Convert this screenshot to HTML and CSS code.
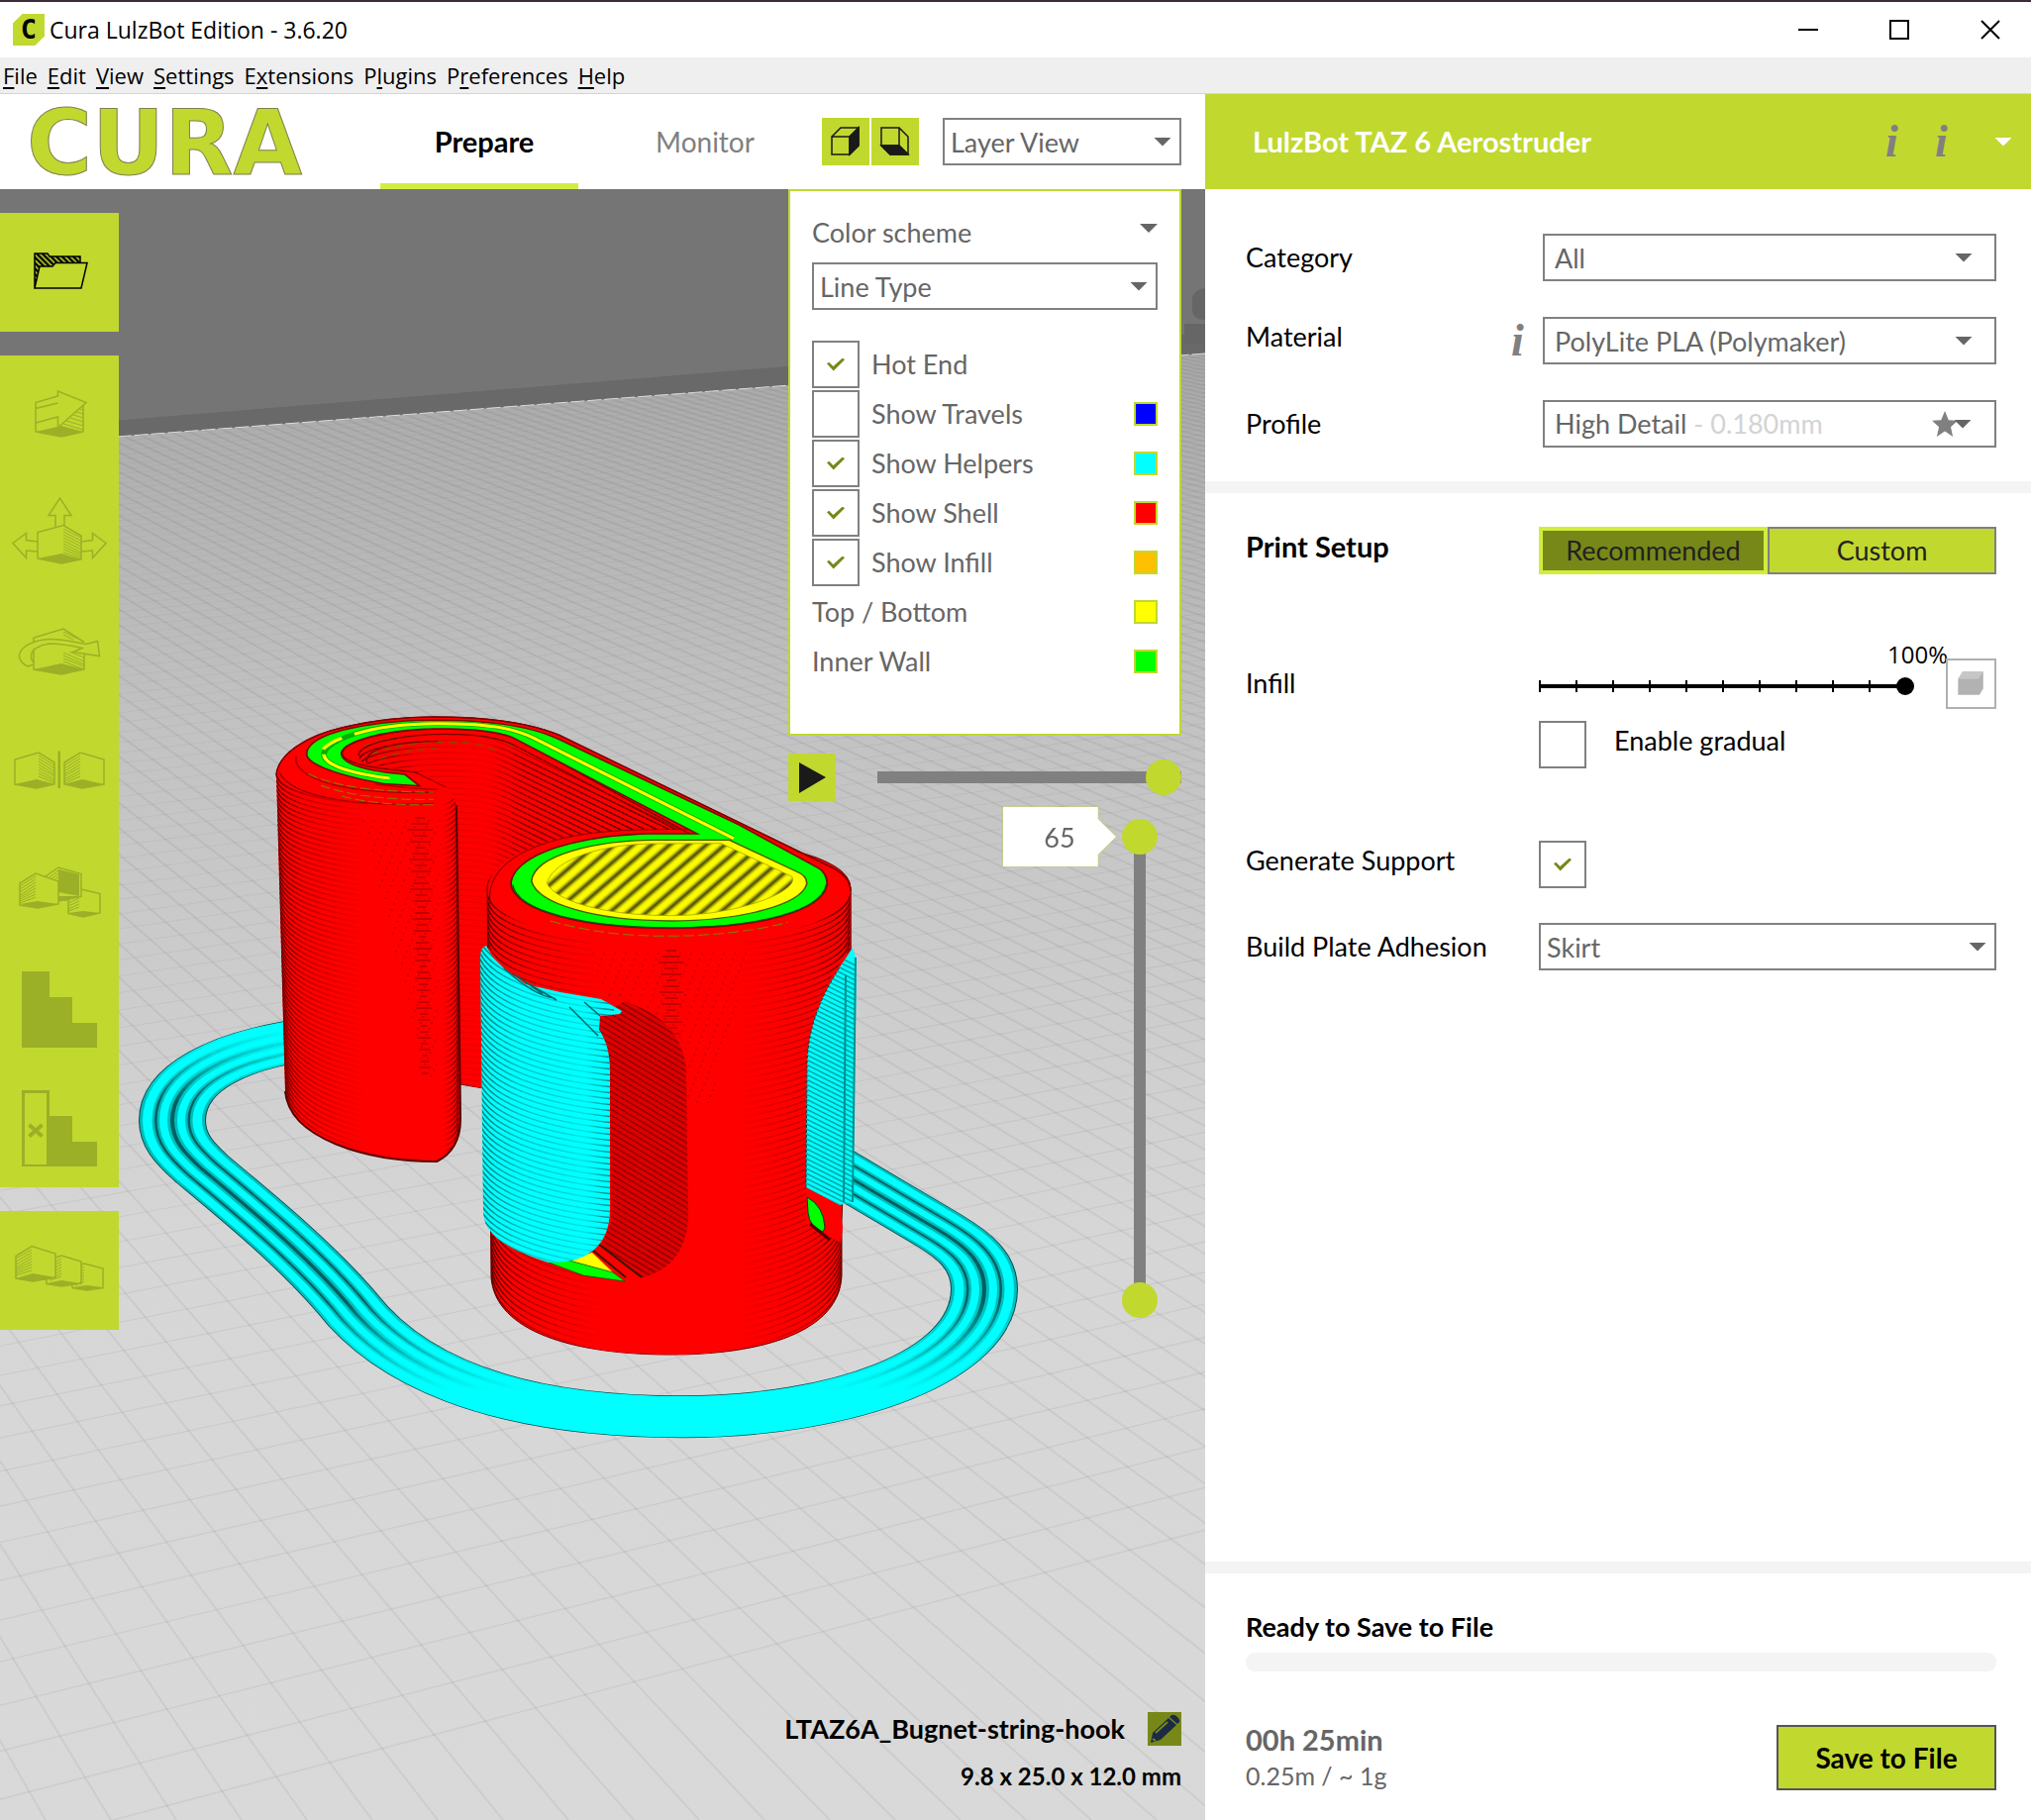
FILE: index.html
```html
<!DOCTYPE html>
<html lang="en">
<head>
    <meta charset="UTF-8">
    <meta name="viewport" content="width=device-width, initial-scale=1.0">
    <title>Cura LulzBot Edition - 3.6.20</title>
    <link rel="stylesheet" href="styles.css">
</head>
<body>

    <!-- Title bar -->
    <header class="titlebar">
        <span class="app-icon" aria-hidden="true">C</span>
        <h1 class="app-title">Cura LulzBot Edition - 3.6.20</h1>
        <div class="window-buttons">
            <button aria-label="Minimize"><svg viewBox="0 0 20 20"><path d="M0 10H20"/></svg></button>
            <button aria-label="Maximize"><svg viewBox="0 0 20 20"><path d="M1 1H19V19H1Z"/></svg></button>
            <button aria-label="Close"><svg viewBox="0 0 20 20"><path d="M1 1L19 19M19 1L1 19"/></svg></button>
        </div>
    </header>

    <nav class="menubar">
        <a href="#"><u>F</u>ile</a>
        <a href="#"><u>E</u>dit</a>
        <a href="#"><u>V</u>iew</a>
        <a href="#"><u>S</u>ettings</a>
        <a href="#">E<u>x</u>tensions</a>
        <a href="#">P<u>l</u>ugins</a>
        <a href="#">P<u>r</u>eferences</a>
        <a href="#"><u>H</u>elp</a>
    </nav>

    <main class="app">
        <section class="workspace">
            <div class="topbar">
                <div class="logo">CURA</div>
                <div class="tabs">
                    <a class="tab active" href="#">Prepare</a>
                    <a class="tab" href="#">Monitor</a>
                </div>
                <div class="view-tools">
                    <button class="view-button" aria-label="Perspective">
                        <svg viewBox="0 0 48 48"><path class="dark" d="M28 19L37 10V28L28 37Z"/><path d="M10 19H28V37H10ZM10 19L19 10H37M28 19L37 10V28L28 37"/></svg>
                    </button>
                    <button class="view-button" aria-label="Orthographic">
                        <svg viewBox="0 0 48 48"><path class="dark" d="M10 28H28L37 37H19Z"/><path d="M10 10H28V28H10ZM28 10L37 19V37H19L10 28M28 28L37 37"/></svg>
                    </button>
                </div>
                <div class="combo view-combo">
                    <select aria-label="View mode"><option>Layer View</option></select>
                </div>
            </div>

            <div class="stage">
                <svg class="scene" viewBox="0 191 1217 1647" preserveAspectRatio="xMinYMin slice" aria-hidden="true">
                    <defs>
                        <linearGradient id="floor" x1="0" y1="0" x2="0" y2="1">
                            <stop offset="0" stop-color="#a9a9a9"/>
                            <stop offset=".25" stop-color="#c2c2c2"/>
                            <stop offset=".6" stop-color="#d6d6d6"/>
                            <stop offset="1" stop-color="#d9d9d9"/>
                        </linearGradient>
                        <linearGradient id="groove" gradientUnits="userSpaceOnUse" x1="0" y1="1650" x2="0" y2="2230">
                            <stop offset="0" stop-color="#00ffff"/>
                            <stop offset=".2" stop-color="#005f5f"/>
                            <stop offset=".75" stop-color="#005f5f"/>
                            <stop offset="1" stop-color="#00ffff"/>
                        </linearGradient>
                        <linearGradient id="grooveSoft" gradientUnits="userSpaceOnUse" x1="0" y1="1650" x2="0" y2="2230">
                            <stop offset="0" stop-color="#00ffff"/>
                            <stop offset=".2" stop-color="#00bcbc"/>
                            <stop offset=".75" stop-color="#00bcbc"/>
                            <stop offset="1" stop-color="#00ffff"/>
                        </linearGradient>
                        <linearGradient id="columnLines" gradientUnits="userSpaceOnUse" x1="279" y1="0" x2="465" y2="0">
                            <stop offset="0" stop-color="#5a0000"/>
                            <stop offset=".15" stop-color="#b80000"/>
                            <stop offset=".5" stop-color="#ff0000"/>
                            <stop offset=".9" stop-color="#ff0000"/>
                            <stop offset="1" stop-color="#600000"/>
                        </linearGradient>
                        <linearGradient id="bodyLines" gradientUnits="userSpaceOnUse" x1="493" y1="0" x2="859" y2="0">
                            <stop offset="0" stop-color="#5a0000"/>
                            <stop offset=".12" stop-color="#b80000"/>
                            <stop offset=".32" stop-color="#ff0000"/>
                            <stop offset=".68" stop-color="#ff0000"/>
                            <stop offset=".9" stop-color="#b80000"/>
                            <stop offset="1" stop-color="#5a0000"/>
                        </linearGradient>
                        <linearGradient id="wallLines" gradientUnits="userSpaceOnUse" x1="362" y1="0" x2="620" y2="0">
                            <stop offset="0" stop-color="#500000"/>
                            <stop offset=".25" stop-color="#e00000"/>
                            <stop offset=".5" stop-color="#f00000"/>
                            <stop offset=".65" stop-color="#8c0000"/>
                            <stop offset="1" stop-color="#700000"/>
                        </linearGradient>
                        <linearGradient id="supportLines" gradientUnits="userSpaceOnUse" x1="485" y1="0" x2="617" y2="0">
                            <stop offset="0" stop-color="#007a7a"/>
                            <stop offset=".3" stop-color="#00c0c0"/>
                            <stop offset=".8" stop-color="#00e2e2"/>
                            <stop offset="1" stop-color="#008080"/>
                        </linearGradient>
                        <linearGradient id="bead" gradientUnits="userSpaceOnUse" x1="0" y1="0" x2="24" y2="22" spreadMethod="repeat">
                            <stop offset="0" stop-color="#4a4a00"/>
                            <stop offset=".3" stop-color="#f0f000"/>
                            <stop offset=".5" stop-color="#ffff00"/>
                            <stop offset=".7" stop-color="#f0f000"/>
                            <stop offset="1" stop-color="#4a4a00"/>
                        </linearGradient>
                        <clipPath id="floorClip"><path d="M0 450L1217 357V1838H0Z"/></clipPath>
                        <clipPath id="wallClip"><path d="M421 780C395 778 362 775 362 763C362 750 405 742 450 742C485 742 500 745 520 756L699 843C640 840 560 850 520 870C500 880 493 890 493 900V1100L465 1095L461 813C458 800 440 785 421 780Z"/></clipPath>
                        <clipPath id="columnClip"><path id="columnShape" d="M279 783L288 1102C292 1150 370 1173 441 1173C457 1165 465 1150 465 1130L461 815C458 795 445 790 421 780L300 760Z"/></clipPath>
                        <clipPath id="bodyClip"><path d="M492 897V955L509 978C531 1000 570 1003 607 1009L631 1011C665 1022 692 1050 694 1070V1244C688 1272 660 1292 631 1294L554 1275L496 1246V1290C500 1345 580 1368 677 1368C770 1368 848 1345 850 1288V1234L818 1234L815 1075C818 1030 833 990 858 960V897Z"/></clipPath>
                        <clipPath id="supportClip"><path id="supportShape" d="M485 968Q485 956 491 955L497 966L509 978L531 994L566 1002L607 1009L628 1021L626 1024L606 1026L605 1040C613 1052 616 1064 616 1084V1220C616 1252 600 1276 554 1275C526 1266 505 1256 496 1244Q488 1236 488 1222Z"/></clipPath>
                        <clipPath id="recessClip"><path id="recessShape" d="M606 1026L631 1011L648 1018C675 1030 693 1055 693 1084L695 1230C694 1262 676 1284 648 1290L607 1258L617 1234L616 1072L605 1045Z"/></clipPath>
                        <clipPath id="rightClip"><path id="rightShape" d="M861 957L865 970L861 1214L848 1217L814 1199L815 1075C816 1035 830 1005 848 977Z"/></clipPath>
                    </defs>

                    <!-- Back wall and build plate -->
                    <rect y="191" width="1217" height="300" fill="#757575"/>
                    <path d="M0 434L796 370L1217 336V380L0 470Z" fill="#696969"/>
                    <path d="M1204 300q3-8 13-9v32q-12 0-13-9ZM1196 327h21v20h-21Z" fill="#666"/>
                    <path d="M0 450L1217 357V1838H0Z" fill="url(#floor)"/>
                    <path d="M0 450L1217 357" stroke="#e0e0e0" stroke-dasharray="14 3" fill="none"/>
                    <g id="grid" clip-path="url(#floorClip)" stroke="#000" stroke-opacity=".055" stroke-width="2" fill="none"></g>

                    <!-- Skirt, flattened by the camera angle -->
                    <g id="skirt" transform="scale(1 .63)" fill="none"></g>

                    <!-- Hook: far wall, then the front column -->
                    <path d="M279 783C280 763 307 743 349 734C379 727 408 724 438 724C484 724 530 728 564 742L840 876C852 882 859 890 859 900V960L700 1099H488L465 1095L300 900Z" fill="#ff0000" stroke="#6a0000"/>
                    <g id="wall" clip-path="url(#wallClip)" fill="none" stroke="url(#wallLines)" stroke-width="1.5"></g>
                    <use href="#columnShape" fill="#ff0000"/>
                    <g id="column" clip-path="url(#columnClip)" fill="none" stroke="url(#columnLines)" stroke-width="1.5"></g>
                    <path d="M461 813L465 1130C465 1150 457 1165 441 1173C370 1173 292 1150 288 1102" fill="none" stroke="#5a0000" stroke-width="2"/>

                    <!-- Cylinder body -->
                    <path d="M492 897L496 1290C500 1345 580 1368 677 1368C770 1368 848 1345 850 1288V1234L859 960V897C859 830 492 830 492 897Z" fill="#ff0000" stroke="#6a0000"/>
                    <g id="body" clip-path="url(#bodyClip)" fill="none" stroke="url(#bodyLines)" stroke-width="1.5"></g>

                    <!-- Recess and helper structures -->
                    <use href="#recessShape" fill="#dc0000"/>
                    <g id="recess" clip-path="url(#recessClip)" stroke="#8c0000" stroke-width="1.5"></g>
                    <path d="M575 1273L598 1265L619 1285Z" fill="#ffff00"/>
                    <path d="M554 1275L575 1273L619 1285L631 1294L589 1288Z" fill="#00ff00" stroke="#004000" stroke-width=".6"/>
                    <path d="M604 1256L648 1290M598 1262L632 1290" stroke="#3a1600" stroke-width="2"/>
                    <use href="#supportShape" fill="#00ffff"/>
                    <g id="support" clip-path="url(#supportClip)" fill="none" stroke="url(#supportLines)" stroke-width="1.5"></g>
                    <path d="M509 978Q540 1006 560 1008M520 984L548 1004M531 992L562 1010M575 1017L604 1046M590 1012L606 1026" stroke="#006a6a" stroke-width="1.5" fill="none"/>
                    <path d="M814 1199L848 1217L851 1240L849 1255L814 1236Z" fill="#ff0000"/>
                    <path d="M815 1209Q832 1218 833 1240L831 1244Q818 1240 816 1225Z" fill="#00ff00" stroke="#003c00"/>
                    <path d="M818 1236L838 1252" stroke="#500000" stroke-width="3"/>
                    <use href="#rightShape" fill="#00ffff"/>
                    <g id="right" clip-path="url(#rightClip)" stroke="#00a4a4" stroke-width="1.5"></g>
                    <path d="M864 967L861 1214M854 985L852 1214" stroke="#008f8f" stroke-width="2"/>
                    <path d="M814 1199L815 1075C816 1035 830 1005 848 977" stroke="#004848" fill="none" stroke-dasharray="3 2"/>

                    <!-- Top layer -->
                    <g transform="translate(240 700) scale(.4209 .3333)" fill="none">
                        <path d="M600 600C600 480 780 414 1000 412L1110 416L1200 400L1425 527C1455 545 1470 570 1470 600C1460 690 1290 755 1040 755C790 755 610 700 600 600Z" fill="#ff0000"/>
                        <path d="M606 640C590 500 740 420 960 414L1100 412" stroke="#8a0000" stroke-width="3"/>
                        <path d="M100 240C130 320 300 345 470 334M140 190C130 260 260 310 470 300M500 285L420 236M480 292Q410 290 330 275" stroke="#a00000" stroke-width="4"/>
                        <path d="M170 245Q260 300 470 300M200 280Q300 325 470 322M250 312Q340 342 470 338" stroke="#808000" stroke-width="3" stroke-dasharray="24 9"/>
                        <path d="M300 160Q380 125 500 125T660 160M320 185Q380 150 490 148T620 180M340 200Q400 170 480 168" stroke="#606000" stroke-width="3" stroke-dasharray="20 12"/>
                        <path d="M430 240C330 228 250 215 250 180C260 140 380 108 490 108C580 108 640 120 680 145L1090 430M290 190C290 150 400 124 500 124C590 124 640 140 670 162L1050 412M310 210C300 165 400 146 480 146" stroke="#7a0000" stroke-width="4"/>
                        <path d="M430 278L350 272C250 250 168 215 168 185C168 120 330 84 470 84C600 84 700 100 770 142L1200 400L1390 530C1405 540 1413 560 1412 580C1400 660 1250 710 1040 710C830 710 670 660 658 580C660 490 820 430 1000 428H1110L660 132C620 112 560 106 480 106C370 106 247 140 247 185C250 225 340 242 400 248Z" fill="#00ff00" stroke="#7a0800" stroke-width="9" paint-order="stroke"/>
                        <path d="M660 580C670 660 830 710 1040 710C1250 710 1400 660 1412 580" stroke="#005c00" stroke-width="3"/>
                        <path d="M365 258C280 245 207 220 207 185C207 150 300 92 480 92C600 92 660 105 710 136L1190 440" stroke="#00b000" stroke-width="14"/>
                        <path d="M365 258C280 245 207 220 207 185M205 170Q220 150 250 136M280 124Q360 92 480 92C600 92 660 105 710 136L1190 440" stroke="#ffff00" stroke-width="9"/>
                        <path d="M1180 445L1340 540C1360 550 1367 565 1365 580C1350 640 1210 690 1040 690C860 690 720 640 705 570C710 490 860 446 1000 445Z" fill="#ffff00" stroke="#4a5a00" stroke-width="4"/>
                        <path d="M1160 455L1330 556C1350 600 1200 674 1040 674C880 674 760 630 742 575C760 500 880 456 1000 456Z" fill="url(#bead)" stroke="#a0a000" stroke-width="2"/>
                        <path d="M750 690Q880 738 1040 736T1320 694" stroke="#808000" stroke-width="3" stroke-dasharray="26 10"/>
                    </g>
                    <path d="M279 783C280 763 307 743 349 734C379 727 408 724 438 724C484 724 530 728 564 742L840 876C852 882 859 890 859 900" fill="none" stroke="#7a0000" stroke-width="1.5"/>
                </svg>

                <aside class="toolbar">
                    <div class="tool-group">
                        <button class="tool open" aria-label="Open File">
                            <svg viewBox="0 0 120 120">
                                <defs><pattern id="stripes" width="4" height="4" patternUnits="userSpaceOnUse" patternTransform="rotate(-45)"><rect width="2.4" height="4" fill="#000"/></pattern></defs>
                                <path d="M35 76L40 54H53L56 50H81V44H50L48 41H35Z"/>
                                <path d="M35 76V41H48L50 44H81V50M35 76L40 54H53L56 50.500H88L82 76Z"/>
                            </svg>
                        </button>
                    </div>
                    <div class="tool-group">
                        <button class="tool" aria-label="Move">
                            <svg viewBox="0 0 120 120">
                                <path class="fill" d="M36 77L62 71L84 77L62 82Z"/>
                                <path d="M36 77V47.500L58.500 41V36L87 47.500L60.500 71H58.500V62L36 68M36 53.500L58.500 48M84 50V77M36 77L62 82L84 77"/>
                                <path class="hatch" d="M80 54L84 55M77 57L84 59M74 60L84 63M71 63L84 67M67 66L84 71M64 69L84 75"/>
                            </svg>
                        </button>
                        <button class="tool" aria-label="Scale">
                            <svg viewBox="0 0 120 120">
                                <path class="fill" d="M38 85L62 80L82 86L62 90Z"/>
                                <path d="M56 53V41.500H49L60.500 24L72 41.500H65V51.500M38 68L26.500 66.500V59.500L13 69.500L26.500 84.500V77L38 78M82 68L93.500 66.500V59.500L107 69.500L93.500 84.500V77L82 78M38 85V58.500L64 51.500L82 62V86L62 90Z"/>
                                <path class="hatch" d="M64 55L82 64M64 58L82 67M64 61L82 70M64 64L82 73M64 67L82 76M64 70L82 79M64 73L82 81M64 76L82 83M64 79L82 85"/>
                            </svg>
                        </button>
                        <button class="tool" aria-label="Rotate">
                            <svg viewBox="0 0 120 120">
                                <path class="fill" d="M34 77L62 71L85 77L62 82Z"/>
                                <path d="M34 49V45L64 36L85 49.500M34 56V77L62 82L85 77V61M28 74C22 71 19 67 19.500 62.500C21 53 36 47 50 46.500C64 46 75 50 87 51.500L98.500 48.500L100.500 63.500L74 59.500L83 55.500C72 53 60 51 50 51C40 52 32 57 31.500 62.500C31 66 32 68 34 70M28 74L34 72"/>
                                <path class="hatch" d="M64 39L78 46M64 42L74 47M64 60L85 69M64 63L85 72M64 66L85 74M64 69L85 77M70 59L85 65"/>
                            </svg>
                        </button>
                        <button class="tool" aria-label="Mirror">
                            <svg viewBox="0 0 120 120">
                                <path class="fill" d="M15 73L37 68L55 73L37 77ZM105 73L83 68L65 73L83 77ZM58.500 39.500H61V77H58.500Z"/>
                                <path d="M15 73V48L39 41L55 51V73L37 77ZM105 73V48L81 41L65 51V73L83 77Z"/>
                                <path class="hatch" d="M39 44L55 54M39 47L55 57M39 50L55 60M39 53L55 63M39 56L55 65M39 59L55 68M39 62L55 70M39 65L55 72M81 44L65 54M81 47L65 57M81 50L65 60M81 53L65 63M81 56L65 65M81 59L65 68M81 62L65 70M81 65L65 72"/>
                            </svg>
                        </button>
                        <button class="tool" aria-label="Per Model Settings">
                            <svg viewBox="0 0 120 120">
                                <path class="fill" d="M20 74L38 71L59 74L38 78ZM59 39L80 44V66L59 62ZM59 66L82 66L66 71L59 70ZM69 83L84 81L101 83L84 87Z"/>
                                <path d="M20 75V53L36 43L59 51V74L38 78ZM46 46L59 37L82 43.500V66.500L59 71M82 59L101 63.500V83L84 87L69 83.500V69"/>
                                <path class="hatch" d="M36 46L20 56M36 49L20 59M36 52L20 62M36 55L20 65M36 58L20 67M36 61L20 69M36 64L20 71M36 67L20 73M59 40L50 47M59 43L53 48M59 46L56 49M80 68L69 73M80 71L69 76M80 74L69 79M80 77L69 81"/>
                            </svg>
                        </button>
                        <button class="tool" aria-label="Support Blocker">
                            <svg viewBox="0 0 120 120"><path class="fill" d="M22 22H50V48H73V74H98V99H22Z"/></svg>
                        </button>
                        <button class="tool" aria-label="Support Eraser">
                            <svg viewBox="0 0 120 120"><path class="fill" fill-rule="evenodd" d="M22 22H50V48H73V74H98V99H22ZM25 25V97H47V25Z"/><path class="cross" d="M29.500 57L42.500 68.500M42.500 57L29.500 68.500"/></svg>
                        </button>
                    </div>
                    <div class="tool-group">
                        <button class="tool" aria-label="Arrange Models">
                            <svg viewBox="0 0 120 120">
                                <path class="fill" d="M16 68L33 63L56 67L33 71ZM47 73L62 70L82 73L62 76ZM73 77L88 75L104 77L88 80Z"/>
                                <path d="M16 68V45.500L32 35.500L56 43V67L33 71ZM56 47L62 45L82 51V73L62 76L47 73.500V69M82 54L85 53L104 58V77.500L88 80L73 77.500V74"/>
                                <path class="hatch" d="M32 39L16 48M32 42L16 51M32 45L16 54M32 48L16 57M32 51L16 59M32 54L16 61M32 57L16 63M32 60L16 65M62 48L56 51M62 51L56 54M62 54L56 57M62 57L56 60M62 60L56 63M62 63L56 66M62 66L50 70M85 56L82 58M85 59L82 61M85 62L82 64M85 65L82 67M85 68L82 70M85 71L76 75"/>
                            </svg>
                        </button>
                    </div>
                </aside>

                <div class="view-side">
                    <form class="layer-panel">
                        <div class="scheme-head"><label for="scheme">Color scheme</label><span class="arrow"></span></div>
                        <div class="combo">
                            <select id="scheme"><option>Line Type</option></select>
                        </div>
                        <ul class="legend">
                            <li><label><input type="checkbox" checked>Hot End</label></li>
                            <li><label><input type="checkbox">Show Travels</label><span class="swatch travels"></span></li>
                            <li><label><input type="checkbox" checked>Show Helpers</label><span class="swatch helpers"></span></li>
                            <li><label><input type="checkbox" checked>Show Shell</label><span class="swatch shell"></span></li>
                            <li><label><input type="checkbox" checked>Show Infill</label><span class="swatch fill-lines"></span></li>
                            <li><span>Top / Bottom</span><span class="swatch skin"></span></li>
                            <li><span>Inner Wall</span><span class="swatch inner"></span></li>
                        </ul>
                    </form>

                    <div class="path-row">
                        <button class="play" aria-label="Play"><svg viewBox="0 0 48 48"><path d="M11 9L38 24L11 40Z"/></svg></button>
                        <input class="path-range" type="range" min="0" max="100" value="100" aria-label="Path">
                    </div>

                    <div class="layer-row">
                        <div class="layer-tag"><output class="layer-value">65</output></div>
                        <div class="layer-slider">
                            <input type="range" min="1" max="65" value="1" aria-label="Lowest layer">
                            <input type="range" min="1" max="65" value="65" aria-label="Highest layer">
                        </div>
                    </div>

                    <div class="job">
                        <div class="job-name">
                            <strong>LTAZ6A_Bugnet-string-hook</strong>
                            <button class="rename" aria-label="Rename job">
                                <svg viewBox="0 0 34 34"><path d="M3 31L5 21L21 6L29 13L13 28Z"/><path d="M23 4Q26 1 30 5T31 11L30 12L22 5Z"/><path class="shine" d="M8 21L20 10M5 27L8 29"/></svg>
                            </button>
                        </div>
                        <strong class="job-size">9.8 x 25.0 x 12.0 mm</strong>
                    </div>
                </div>
            </div>
        </section>

        <section class="sidebar">
            <div class="machine">
                <h2>LulzBot TAZ 6 Aerostruder</h2>
                <button class="info" aria-label="Machine information">i</button>
                <button class="info" aria-label="Tool head information">i</button>
                <button class="machine-menu" aria-label="Choose machine"><span class="arrow"></span></button>
            </div>

            <div class="settings material-settings">
                <div class="row">
                    <label for="category">Category</label>
                    <div class="combo wide"><select id="category"><option>All</option></select></div>
                </div>
                <div class="row">
                    <span class="with-info"><label class="raised" for="material">Material</label><button class="info" aria-label="Material information">i</button></span>
                    <div class="combo wide"><select id="material"><option>PolyLite PLA (Polymaker)</option></select></div>
                </div>
                <div class="row">
                    <span id="profile-label">Profile</span>
                    <button class="profile" aria-labelledby="profile-label">
                        <span>High Detail <span class="faint">- 0.180mm</span></span>
                        <svg class="star" viewBox="0 0 24 24"><path d="M12 0L15.500 8.500L24 9L17.500 15L19.500 24L12 19L4.500 24L6.500 15L0 9L8.500 8.500Z"/></svg>
                        <span class="arrow"></span>
                    </button>
                </div>
            </div>

            <div class="settings print-settings">
                <div class="row">
                    <h3 class="raised">Print Setup</h3>
                    <div class="modes">
                        <button class="mode selected">Recommended</button>
                        <button class="mode">Custom</button>
                    </div>
                </div>
                <div class="row infill-row">
                    <label for="infill">Infill</label>
                    <div class="infill">
                        <div class="infill-slider">
                            <output>100%</output>
                            <input id="infill" type="range" min="0" max="100" step="10" value="100">
                        </div>
                        <button class="infill-icon" aria-label="Infill density">
                            <svg viewBox="0 0 50 50"><path fill="#b2b2b2" d="M11 20L16 12H38L38 30L34 37H11Z"/><path fill="#c6c6c6" d="M11 20L16 12H38L33 20Z"/></svg>
                        </button>
                    </div>
                </div>
                <div class="row gradual-row">
                    <span></span>
                    <div class="gradual">
                        <input id="gradual" type="checkbox">
                        <label class="raised" for="gradual">Enable gradual</label>
                    </div>
                </div>
                <div class="row support-row">
                    <label class="raised" for="support-box">Generate Support</label>
                    <input id="support-box" type="checkbox" checked>
                </div>
                <div class="row">
                    <label for="adhesion">Build Plate Adhesion</label>
                    <div class="combo"><select id="adhesion"><option>Skirt</option></select></div>
                </div>
            </div>

            <footer class="save">
                <h3>Ready to Save to File</h3>
                <div class="progress"></div>
                <div class="save-row">
                    <div>
                        <div class="time">00h 25min</div>
                        <div class="usage">0.25m / ~ 1g</div>
                    </div>
                    <button class="save-button">Save to File</button>
                </div>
            </footer>
        </section>
    </main>

    <script src="scene.js"></script>
</body>
</html>
```
FILE: styles.css
```css
* {
    margin: 0;
    padding: 0;
    box-sizing: border-box;
}

body {
    font-family: Lato, "Open Sans", sans-serif;
    font-size: 27px;
    line-height: 36px;
    background-color: #fff;
    color: #000;
    display: flex;
    flex-direction: column;
    min-height: 100vh;
}

button, select, input {
    font: inherit;
    color: inherit;
    border: none;
    background: none;
    border-radius: 0;
}

button {
    cursor: pointer;
}

a {
    color: inherit;
    text-decoration: none;
}

svg {
    display: block;
}

/* Title bar and menu */
.titlebar {
    display: flex;
    align-items: center;
    height: 58px;
    border-top: 2px solid #3a2c38;
    padding: 0 31px 0 13px;
    font-family: "Open Sans", sans-serif;
}

.app-icon {
    width: 32px;
    height: 32px;
    margin-right: 5px;
    background-color: #c1d82f;
    clip-path: polygon(30% 0, 100% 0, 100% 70%, 70% 100%, 0 100%, 0 30%);
    font: bold 27px/32px "DejaVu Sans Mono", monospace;
    text-align: center;
}

.app-title {
    flex: 1;
    font-size: 23px;
    font-weight: normal;
}

.window-buttons {
    display: flex;
    gap: 72px;
}

.window-buttons svg {
    width: 20px;
    height: 20px;
    fill: none;
    stroke: #000;
    stroke-width: 2;
}

.menubar {
    display: flex;
    align-items: center;
    gap: 10px;
    height: 37px;
    padding: 0 3px;
    background-color: #efefef;
    border-bottom: 1px solid #d4d4d4;
    font: 22px/36px "Open Sans", sans-serif;
}

.menubar u {
    text-underline-offset: 3px;
}

.app {
    flex: 1;
    display: grid;
    grid-template-columns: 1fr 834px;
}

.workspace {
    display: flex;
    flex-direction: column;
}

/* Top bar */
.topbar {
    display: flex;
    align-items: center;
    height: 96px;
    padding: 0 24px 0 27px;
}

.logo {
    width: 357px;
    padding-top: 4px;
    font: bold 90px/92px "DejaVu Sans", sans-serif;
    color: #c1d82f;
    -webkit-text-stroke: 1px #808050;
}

.tabs {
    display: flex;
    gap: 28px;
    height: 100%;
}

.tab {
    width: 200px;
    font-size: 28px;
    line-height: 96px;
    text-align: center;
    color: #808080;
}

.tab.active {
    padding-left: 10px;
    color: #000;
    font-size: 29px;
    font-weight: bold;
    border-bottom: 6px solid #d1ed45;
}

.view-tools {
    display: flex;
    gap: 2px;
    margin: 0 24px 0 auto;
}

.view-button {
    width: 48px;
    height: 48px;
    background-color: #c1d82f;
}

.view-button path {
    fill: none;
    stroke: #1a1a1a;
    stroke-width: 1.5;
}

.view-button .dark {
    fill: #1a1a1a;
}

/* Drop-downs */
.arrow,
.combo::after {
    content: "";
    display: block;
    width: 18px;
    height: 9px;
    background-color: #666;
    clip-path: polygon(0 0, 100% 0, 50% 100%);
}

.combo {
    display: grid;
    align-items: center;
    height: 48px;
}

.combo select,
.combo::after {
    grid-area: 1 / 1;
}

.combo::after {
    justify-self: end;
    margin-right: 10px;
    pointer-events: none;
}

.combo select {
    appearance: none;
    width: 100%;
    height: 48px;
    padding: 2px 6px 0;
    border: 2px solid #808080;
    background-color: #fff;
    color: #666;
}

.combo.wide select {
    padding: 2px 10px 0;
}

.combo.wide::after {
    margin-right: 24px;
}

.view-combo {
    width: 241px;
}

/* Check boxes */
input[type="checkbox"] {
    appearance: none;
    display: grid;
    place-items: center;
    flex: none;
    width: 48px;
    height: 48px;
    border: 2px solid #808080;
    background-color: #fff;
}

input[type="checkbox"]:checked::before {
    content: "";
    width: 18px;
    height: 13px;
    background-color: #778818;
    clip-path: polygon(0 44%, 12% 32%, 36% 66%, 88% 0, 100% 14%, 37% 100%);
}

/* 3D view */
.stage {
    flex: 1;
    position: relative;
    display: flex;
    justify-content: space-between;
    padding: 0 24px 24px 0;
    background-color: #d9d9d9;
}

.scene {
    position: absolute;
    inset: 0;
    width: 100%;
    height: 100%;
}

.toolbar,
.view-side {
    position: relative;
}

.toolbar {
    display: flex;
    flex-direction: column;
    gap: 24px;
    padding-top: 24px;
}

.tool-group {
    display: flex;
    flex-direction: column;
    background-color: #c1d82f;
}

.tool {
    width: 120px;
    height: 120px;
}

.tool path {
    fill: none;
    stroke: #9bb027;
    stroke-width: 1.5;
}

.tool .fill {
    fill: #9bb027;
    stroke: none;
}

.tool .hatch {
    stroke-width: 1;
}

.tool .cross {
    stroke-width: 4;
}

.tool.open path {
    stroke: #000;
}

.tool.open path:first-of-type {
    fill: url(#stripes);
    stroke: none;
}

.view-side {
    display: flex;
    flex-direction: column;
    width: 397px;
}

.layer-panel {
    padding: 24px 22px 49px;
    border: 2px solid #c1d82f;
    background-color: #fff;
    color: #666;
}

.scheme-head {
    display: flex;
    justify-content: space-between;
    margin-bottom: 12px;
}

.scheme-head .arrow {
    margin-top: 9px;
}

.legend {
    display: flex;
    flex-direction: column;
    gap: 2px;
    margin-top: 31px;
    list-style: none;
}

.legend li {
    display: flex;
    align-items: center;
    justify-content: space-between;
    height: 48px;
}

.legend label {
    display: flex;
    align-items: center;
    gap: 12px;
}

.swatch {
    width: 24px;
    height: 24px;
    border: 2px solid #c1d82f;
}

.travels { background-color: #0000ff; }
.helpers { background-color: #00ffff; }
.shell { background-color: #ff0000; }
.fill-lines { background-color: #ffc000; }
.skin { background-color: #ffff00; }
.inner { background-color: #00ff00; }

/* Layer sliders */
.path-row {
    display: flex;
    align-items: center;
    gap: 42px;
    margin-top: 18px;
}

.play {
    width: 48px;
    height: 48px;
    background-color: #c1d82f;
}

.play path {
    fill: #1a1a1a;
}

.path-range {
    appearance: none;
    flex: 1;
    min-width: 0;
    height: 36px;
    background: linear-gradient(#808080, #808080) center / 100% 12px no-repeat;
}

.path-range::-webkit-slider-thumb,
.layer-slider input::-webkit-slider-thumb {
    appearance: none;
    width: 36px;
    height: 36px;
    border-radius: 50%;
    background-color: #c1d82f;
    pointer-events: auto;
}

.layer-row {
    display: flex;
    align-items: flex-start;
    justify-content: flex-end;
    gap: 6px;
    margin: 6px 24px 0 0;
}

.layer-tag {
    filter: drop-shadow(0 0 1px #c1d82f);
}

.layer-value {
    display: block;
    width: 114px;
    height: 60px;
    line-height: 62px;
    text-align: center;
    color: #666;
    background-color: #fff;
    clip-path: polygon(0 0, 84% 0, 84% 20%, 100% 50%, 84% 80%, 84% 100%, 0 100%);
}

.layer-slider {
    display: grid;
    width: 36px;
    height: 504px;
    margin-top: 12px;
    background: linear-gradient(#808080, #808080) center / 12px 480px no-repeat;
}

.layer-slider input {
    grid-area: 1 / 1;
    appearance: none;
    writing-mode: vertical-lr;
    direction: rtl;
    width: 36px;
    height: 504px;
    pointer-events: none;
}

/* Job info */
.job {
    display: flex;
    flex-direction: column;
    align-items: flex-end;
    gap: 10px;
    margin-top: auto;
}

.job-name {
    display: flex;
    align-items: center;
    gap: 23px;
    white-space: nowrap;
}

.job-size {
    font-size: 24px;
    line-height: 40px;
}

.rename {
    width: 34px;
    height: 34px;
    background-color: #778818;
    fill: #1c2a48;
}

.shine {
    fill: none;
    stroke: #778818;
    stroke-width: 2;
}

/* Sidebar */
.sidebar {
    display: flex;
    flex-direction: column;
}

.machine {
    display: flex;
    align-items: center;
    height: 96px;
    padding: 0 19px 0 48px;
    background-color: #c1d82f;
    color: #fff;
}

.machine h2 {
    flex: 1;
    font-size: 29px;
}

.machine .info {
    margin-right: 33px;
}

.info {
    width: 17px;
    font: italic bold 46px/48px "Liberation Serif", serif;
    color: #808080;
}

.machine-menu {
    margin-left: 12px;
}

.machine .arrow {
    background-color: #fff;
}

.settings {
    display: flex;
    flex-direction: column;
    padding: 0 35px 0 41px;
}

.row {
    display: grid;
    grid-template-columns: 296px 1fr;
    align-items: center;
}

.row h3 {
    font-size: 29px;
}

.save h3 {
    font-size: 27px;
}

.raised {
    padding-bottom: 9px;
}

.material-settings {
    gap: 36px;
    padding-top: 45px;
    padding-bottom: 34px;
    border-bottom: 12px solid #f4f4f4;
}

.material-settings .row {
    grid-template-columns: 300px 1fr;
}

.with-info {
    display: flex;
    justify-content: space-between;
    align-items: center;
    height: 48px;
    padding-right: 17px;
}

.profile {
    display: flex;
    align-items: center;
    height: 48px;
    padding: 0 23px 0 10px;
    border: 2px solid #808080;
    color: #666;
}

.faint {
    color: #d3d3d3;
}

.star {
    width: 26px;
    height: 26px;
    margin-left: auto;
    fill: #808080;
}

.profile .arrow {
    margin-left: -4px;
}

.print-settings {
    flex: 1;
    padding-top: 34px;
}

.modes {
    display: grid;
    grid-template-columns: 1fr 1fr;
}

.mode {
    height: 48px;
    border: 2px solid #808080;
    background-color: #c1d82f;
    color: #222;
}

.mode.selected {
    border: 4px solid #d1ed3d;
    background-color: #778818;
}

.infill-row {
    margin-top: 60px;
    height: 100px;
}

.infill {
    display: flex;
    align-items: center;
    justify-content: space-between;
}

.infill-slider {
    display: flex;
    flex-direction: column;
    width: 379px;
    margin-bottom: 24px;
}

.infill-slider output {
    align-self: flex-end;
    margin-right: -34px;
    font: 24px/30px "Open Sans", sans-serif;
}

/* Track with a tick at every tenth */
.infill-slider input {
    appearance: none;
    width: 379px;
    height: 34px;
    background:
        linear-gradient(#000, #000) 0 50% / 370px 4px no-repeat,
        repeating-linear-gradient(90deg, #000 0 2px, transparent 2px 37px) 0 50% / 370px 12px no-repeat;
}

.infill-slider input::-webkit-slider-thumb {
    appearance: none;
    width: 18px;
    height: 18px;
    border-radius: 50%;
    background-color: #000;
}

.infill-icon {
    width: 51px;
    height: 51px;
    border: 2px solid #b0b0b0;
}

.gradual-row {
    margin-top: -12px;
}

.gradual {
    display: flex;
    align-items: center;
    gap: 28px;
}

.support-row {
    margin: 73px 0 35px;
}

.save {
    padding: 36px 35px 27px 41px;
    border-top: 12px solid #f4f4f4;
}

.progress {
    height: 19px;
    margin-top: 8px;
    border-radius: 9px;
    background-color: #f4f4f4;
}

.save-row {
    display: flex;
    justify-content: space-between;
    align-items: center;
    margin-top: 51px;
    color: #666;
}

.time {
    font-size: 29px;
    font-weight: bold;
}

.usage {
    font-size: 25px;
}

.save-button {
    width: 222px;
    height: 66px;
    border: 2px solid #555;
    background-color: #c1d82f;
    color: #000;
    font-size: 28px;
    font-weight: bold;
}
```
FILE: scene.js
```js
const NS = "http://www.w3.org/2000/svg";

function addPath(id, d, attributes) {
    const path = document.createElementNS(NS, "path");
    path.setAttribute("d", d);
    for (const name in attributes) {
        path.setAttribute(name, attributes[name]);
    }
    document.getElementById(id).appendChild(path);
}

// Build plate grid, two families of lines that meet on the horizon
const horizon = -129;
for (let n = 38; n < 150; n++) {
    const y = horizon + 75900 / n;
    addPath("grid", `M0 ${y}L7521 ${horizon}`, { "stroke-width": Math.min(2, 60 / n) });
}
for (let x = -2000; x < 9000; x += 66) {
    addPath("grid", `M-1080 ${horizon}L${x} 1838`);
}

// Skirt beads, widest stroke first
const skirt = "M320 1664C230 1682 174 1728 174 1796C174 1828 186 1848 204 1874C250 1935 308 2010 350 2088C400 2190 500 2271 689 2271C850 2271 994 2190 994 2066C994 2020 972 1995 948 1972L850 1880L760 1796";
const beads = [
    ["#004848", 68],
    ["url(#grooveSoft)", 66],
    ["#00ffff", 60],
    ["url(#grooveSoft)", 41],
    ["url(#groove)", 36],
    ["url(#grooveSoft)", 31],
    ["#00ffff", 26],
    ["url(#grooveSoft)", 10],
    ["url(#groove)", 4]
];
for (const [color, width] of beads) {
    addPath("skirt", skirt, { "stroke": color, "stroke-width": width });
}

// Printed layers
for (let i = 0; i <= 65; i++) {
    const t = i / 65;

    addPath("wall", `M362 ${763 + i * 6}c0 -13 43 -21 88 -21c35 0 50 3 70 14l200 97`);

    const cx = 279 + 9 * t, cy = 783 + 319 * t, drop = 32 + 40 * t;
    addPath("column", `M${cx} ${cy}C${cx + 6} ${cy + drop * 0.7} ${cx + 80} ${cy + drop} ${cx + 160} ${cy + drop}Q462 ${cy + drop - 4} 463 ${cy + drop - 18}`);

    const bx = 492 + 4 * t, br = 859 - 9 * t, by = 897 + 393 * t, bd = 62 + 42 * t;
    addPath("body", `M${bx} ${by}C${bx + 10} ${by + bd} ${br - 10} ${by + bd} ${br} ${by}`);

    addPath("support", `M484 ${925 + i * 6}C495 ${950 + i * 6} 540 ${970 + i * 6} 620 ${978 + i * 6}`);
    addPath("recess", `M600 ${960 + i * 6}L700 ${1020 + i * 6}`);
    addPath("right", `M814 ${950 + i * 5}L864 ${975 + i * 5}`);
}

// Small gaps that show between the layers where the surface faces the camera
for (let i = 0; i < 44; i++) {
    const w = (26 - i / 3) * (0.4 + ((i * 7) % 5) * 0.15);
    const gap = { "stroke": "#5a0000", "stroke-width": 1, "stroke-opacity": 0.7 };
    const dots = { "stroke": "#5a0000", "stroke-width": 1, "stroke-dasharray": "2 9", "stroke-dashoffset": i * 4, "stroke-opacity": 0.5 };
    const spread = 100 - i * 2;

    addPath("column", `M${424 - w / 2 + i / 8} ${826 + i * 6}h${w}`, gap);
    addPath("column", `M${416 - spread / 2 + i / 2} ${829 + i * 6}h${spread * 0.8}`, dots);
    if (i < 26) {
        addPath("body", `M${678 - w / 2} ${960 + i * 6}h${w}`, gap);
        addPath("body", `M${678 - spread * 0.8} ${963 + i * 6}h${spread * 1.6}`, dots);
    }
}
```
